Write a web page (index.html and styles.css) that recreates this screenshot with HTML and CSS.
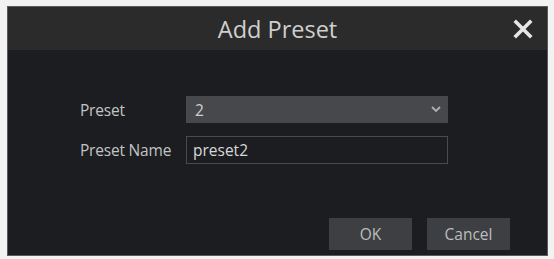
FILE: index.html
```html
<!DOCTYPE html>
<html>
<head>
<meta charset="utf-8">
<link rel="stylesheet" href="styles.css">
</head>
<body>
<div class="dialog">
  <div class="header">
    <span class="title">Add Preset</span>
    <svg class="close" width="20" height="20" viewBox="0 0 20 20"><path d="M3 3 L17 17 M17 3 L3 17" stroke="#e6e6e6" stroke-width="3.6" stroke-linecap="square"/></svg>
  </div>
  <div class="body">
    <div class="form">
      <div class="row">
        <span class="label">Preset</span>
        <div class="select"><span>2</span>
          <svg width="10" height="7" viewBox="0 0 10 7"><path d="M1 1 L5 5 L9 1" fill="none" stroke="#b0b0b0" stroke-width="1.8"/></svg>
        </div>
      </div>
      <div class="row">
        <span class="label">Preset Name</span>
        <div class="input">preset2</div>
      </div>
    </div>
    <div class="buttons">
      <div class="btn">OK</div>
      <div class="btn">Cancel</div>
    </div>
  </div>
</div>
</body>
</html>
```
FILE: styles.css
```css
html, body { margin: 0; padding: 0; background: #f2f2f2; }
body { padding: 6px 6px 3px 7px; font-family: "Open Sans", "Liberation Sans", sans-serif; }
.dialog {
  width: 541px; height: 250px;
  background: #1b1d20;
  border: 1px solid #5a5a5a;
  box-sizing: border-box;
  display: flex; flex-direction: column;
}
.header {
  height: 43px; background: #2b2b2b;
  display: flex; align-items: center; justify-content: center;
  position: relative;
}
.title { color: #cfcfcf; font-size: 23.5px; }
.close { position: absolute; right: 14px; top: 12px; }
.body { flex: 1; display: flex; flex-direction: column; }
.form { padding: 46px 0 0 72px; display: flex; flex-direction: column; gap: 13px; }
.row { display: flex; align-items: center; }
.label { width: 106px; color: #c4c4c4; font-size: 15.5px; letter-spacing: -0.2px; }
.select {
  width: 262px; height: 27px; box-sizing: border-box;
  background: #46484b; color: #d0d0d0; font-size: 15.5px;
  display: flex; align-items: center; justify-content: space-between;
  padding: 0 7px 0 9px;
}
.input {
  width: 262px; height: 28px; box-sizing: border-box;
  border: 1px solid #4a4a4a; background: #1c1d20;
  color: #d8d8d8; font-size: 15.5px;
  display: flex; align-items: center; padding: 0 6px;
}
.buttons { margin-top: auto; display: flex; justify-content: flex-end; gap: 15px; padding: 0 37px 5px 0; }
.btn {
  width: 83px; height: 32px; background: #3d3f42;
  color: #bdbdbd; font-size: 15.5px;
  display: flex; align-items: center; justify-content: center;
}
```
